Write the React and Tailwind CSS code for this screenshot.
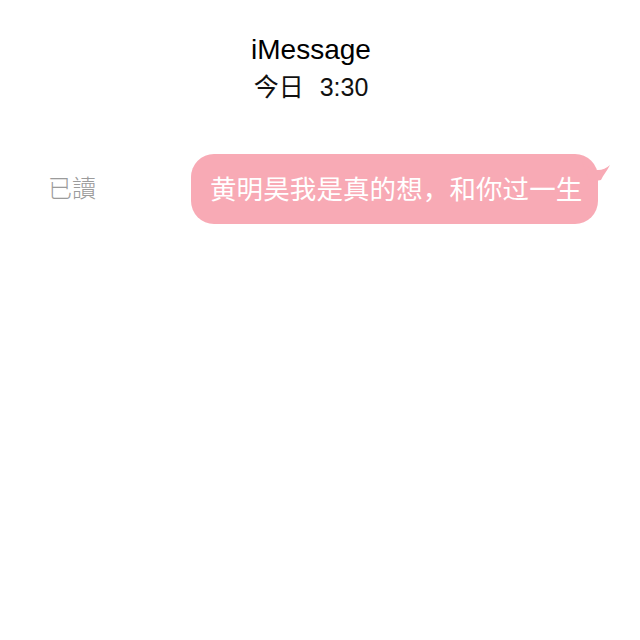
import React from "react";

const cjk = {
  fontFamily:
    '"Liberation Sans", "Noto Sans CJK SC", "Noto Sans CJK TC", sans-serif',
};

const App = () => {
  return (
    <div className="w-[640px] h-[640px] bg-white overflow-hidden" style={cjk}>
      <div className="flex flex-col items-center pt-[32px] pr-[18px]">
        <h1 className="text-[28px] leading-[36px] text-black">iMessage</h1>
        <p className="text-[25px] leading-[34px] text-[#111] mt-[2px]">
          今日<span className="ml-[16px]">3:30</span>
        </p>
      </div>
      <div className="flex items-center mt-[50px]">
        <span className="ml-[48px] w-[143px] text-[24px] text-[#9b9b9b] font-light">
          已讀
        </span>
        <div className="relative">
          <div className="bg-[#f8aab5] rounded-[23px] h-[70px] w-[407px] flex items-center pl-[19px] pt-[3px]">
            <span className="text-[26.5px] text-white whitespace-nowrap tracking-[0.1px]">
              黄明昊我是真的想，和你过一生
            </span>
          </div>
          <svg
            className="absolute top-[4px] right-[-14px]"
            width="30"
            height="26"
            viewBox="0 0 30 26"
          >
            <path
              d="M0 4 C6 8 8 12 16 12 C20 12 25 10 28 7 C25 13 21 17 19 22 L8 24 Z"
              fill="#f8aab5"
            />
          </svg>
        </div>
      </div>
    </div>
  );
};

export default App;
